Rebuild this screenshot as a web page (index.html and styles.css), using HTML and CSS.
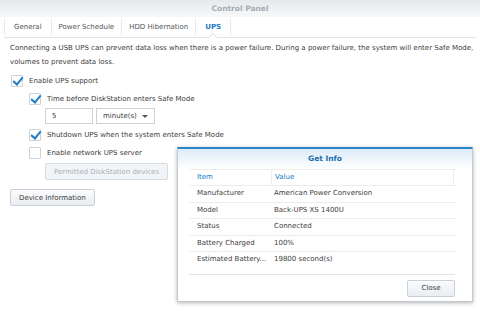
FILE: index.html
```html
<!DOCTYPE html>
<html lang="en">
<head>
  <meta charset="UTF-8">
  <title>Control Panel - UPS</title>
  <link rel="stylesheet" href="styles.css">
</head>
<body>
  <div class="window">
    <div class="titlebar">Control Panel</div>

    <div class="tabs">
      <div class="tab">General</div>
      <div class="tab">Power Schedule</div>
      <div class="tab">HDD Hibernation</div>
      <div class="tab active">UPS</div>
    </div>

    <div class="content">
      <p class="desc">Connecting a USB UPS can prevent data loss when there is a power failure. During a power failure, the system will enter Safe Mode,<br>volumes to prevent data loss.</p>

      <div class="option">
        <span class="box checked"></span>Enable UPS support
      </div>
      <div class="sub">
        <div class="option">
          <span class="box checked"></span>Time before DiskStation enters Safe Mode
        </div>
        <div class="field-row">
          <div class="text-field">5</div>
          <div class="select-field">minute(s)<span class="caret"></span></div>
        </div>
        <div class="option">
          <span class="box checked"></span>Shutdown UPS when the system enters Safe Mode
        </div>
        <div class="option">
          <span class="box"></span>Enable network UPS server
        </div>
        <div class="btn-row">
          <button class="btn disabled">Permitted DiskStation devices</button>
        </div>
      </div>
      <div class="btn-row main">
        <button class="btn">Device Information</button>
      </div>
    </div>

    <div class="dialog">
      <div class="dialog-title">Get Info</div>
      <div class="grid">
        <div class="grid-head">
          <div class="col-item">Item</div>
          <div class="col-value">Value</div>
          <div class="col-pad"></div>
        </div>
        <div class="grid-row"><div class="col-item">Manufacturer</div><div class="col-value">American Power Conversion</div></div>
        <div class="grid-row"><div class="col-item">Model</div><div class="col-value">Back-UPS XS 1400U</div></div>
        <div class="grid-row"><div class="col-item">Status</div><div class="col-value">Connected</div></div>
        <div class="grid-row"><div class="col-item">Battery Charged</div><div class="col-value">100%</div></div>
        <div class="grid-row"><div class="col-item">Estimated Battery...</div><div class="col-value">19800 second(s)</div></div>
      </div>
      <div class="dialog-footer">
        <button class="btn close">Close</button>
      </div>
    </div>
  </div>
</body>
</html>
```

FILE: styles.css
```css
body {
  margin: 0;
  font-family: "DejaVu Sans", Verdana, sans-serif;
  font-size: 7px;
  color: #3c3c3c;
  background: #fff;
}
.window {
  position: relative;
  width: 480px;
  height: 311px;
  overflow: hidden;
  background: #fff;
}
.titlebar {
  height: 17px;
  line-height: 17px;
  text-align: center;
  font-weight: bold;
  font-size: 7.5px;
  color: #a3abb4;
  background: linear-gradient(#e6e9ec, #f7f8f9);
}
.tabs {
  display: flex;
  height: 20px;
  margin: 0 4px;
  border-bottom: 1px solid #e2e5e8;
  position: relative;
}
.tab {
  position: relative;
  padding: 0 7px;
  color: #555;
  border-right: 1px solid #e6e8eb;
  margin: 2px 0;
  line-height: 16px;
}
.tab:first-child {
  border-left: 1px solid #e6e8eb;
  padding: 0 9px;
}
.tab.active {
  color: #1a79c1;
  font-weight: bold;
  padding: 0 9px;
}
.tab.active::after {
  content: "";
  position: absolute;
  left: 50%;
  bottom: -5px;
  width: 5px;
  height: 5px;
  margin-left: -3px;
  background: #fff;
  border-left: 1px solid #e2e5e8;
  border-top: 1px solid #e2e5e8;
  transform: rotate(45deg);
}
.content {
  padding: 0 10px;
}
.desc {
  margin: 3px 0 3px;
  line-height: 14px;
  white-space: nowrap;
}
.option {
  display: flex;
  align-items: center;
  height: 18px;
}
.box {
  width: 10px;
  height: 10px;
  border: 1px solid #cdd2d7;
  border-radius: 1px;
  background: #fff;
  margin: 0 6px 0 1px;
  position: relative;
}
.box.checked::after {
  content: "";
  position: absolute;
  left: 3px;
  top: -1px;
  width: 4px;
  height: 8px;
  border-right: 2px solid #1d7cc3;
  border-bottom: 2px solid #1d7cc3;
  transform: rotate(40deg);
}
.sub {
  padding-left: 18px;
}
.field-row {
  display: flex;
  gap: 3px;
  margin: 0 0 2px 17px;
}
.text-field,
.select-field {
  height: 14px;
  line-height: 14px;
  border: 1px solid #cdd2d7;
  padding: 0 6px;
  background: #fff;
}
.text-field {
  width: 34px;
}
.select-field {
  width: 45px;
  position: relative;
}
.caret {
  position: absolute;
  right: 6px;
  top: 6px;
  border-left: 3px solid transparent;
  border-right: 3px solid transparent;
  border-top: 3px solid #555;
}
.btn-row {
  margin: 1px 0 0 17px;
}
.btn-row.main {
  margin: 9px 0 0 0;
}
.btn {
  font-family: inherit;
  font-size: 7px;
  color: #3c3c3c;
  height: 17px;
  padding: 0 8px;
  border: 1px solid #c9d0d7;
  border-radius: 2px;
  background: linear-gradient(#fbfcfd, #e9edf1);
}
.btn.disabled {
  color: #a8b0b8;
  background: #f2f5f7;
  border-color: #d6dce1;
}
.dialog {
  position: absolute;
  left: 177px;
  top: 147px;
  width: 294px;
  height: 152px;
  background: #fff;
  border: 1px solid #c3cad1;
  border-top: 2px solid #2a86c8;
  box-shadow: 0 1px 4px rgba(0, 0, 0, 0.3);
}
.dialog-title {
  height: 20px;
  line-height: 20px;
  text-align: center;
  font-weight: bold;
  font-size: 7.5px;
  color: #1a6fae;
  background: linear-gradient(#dcebf8, #fff);
}
.grid {
  margin: 0 15px 0 11px;
}
.grid-head,
.grid-row {
  display: flex;
  border-bottom: 1px solid #ececec;
}
.grid-head {
  height: 15px;
  line-height: 15px;
  border-top: 1px solid #ececec;
  color: #1a79c1;
}
.grid-row {
  height: 15.5px;
  line-height: 15.5px;
}
.grid-row:last-child {
  border-bottom: none;
}
.col-item {
  width: 74px;
  padding-left: 8px;
}
.col-value {
  flex: 1;
  padding-left: 3px;
}
.grid-head .col-value {
  border-left: 1px solid #ececec;
  border-right: 1px solid #ececec;
}
.col-pad {
  width: 3px;
}
.dialog-footer {
  margin: 6px 17px 0 11px;
  padding-top: 5px;
  border-top: 1px solid #e4e4e4;
  display: flex;
  justify-content: flex-end;
}
.btn.close {
  width: 48px;
  height: 17px;
}
```
